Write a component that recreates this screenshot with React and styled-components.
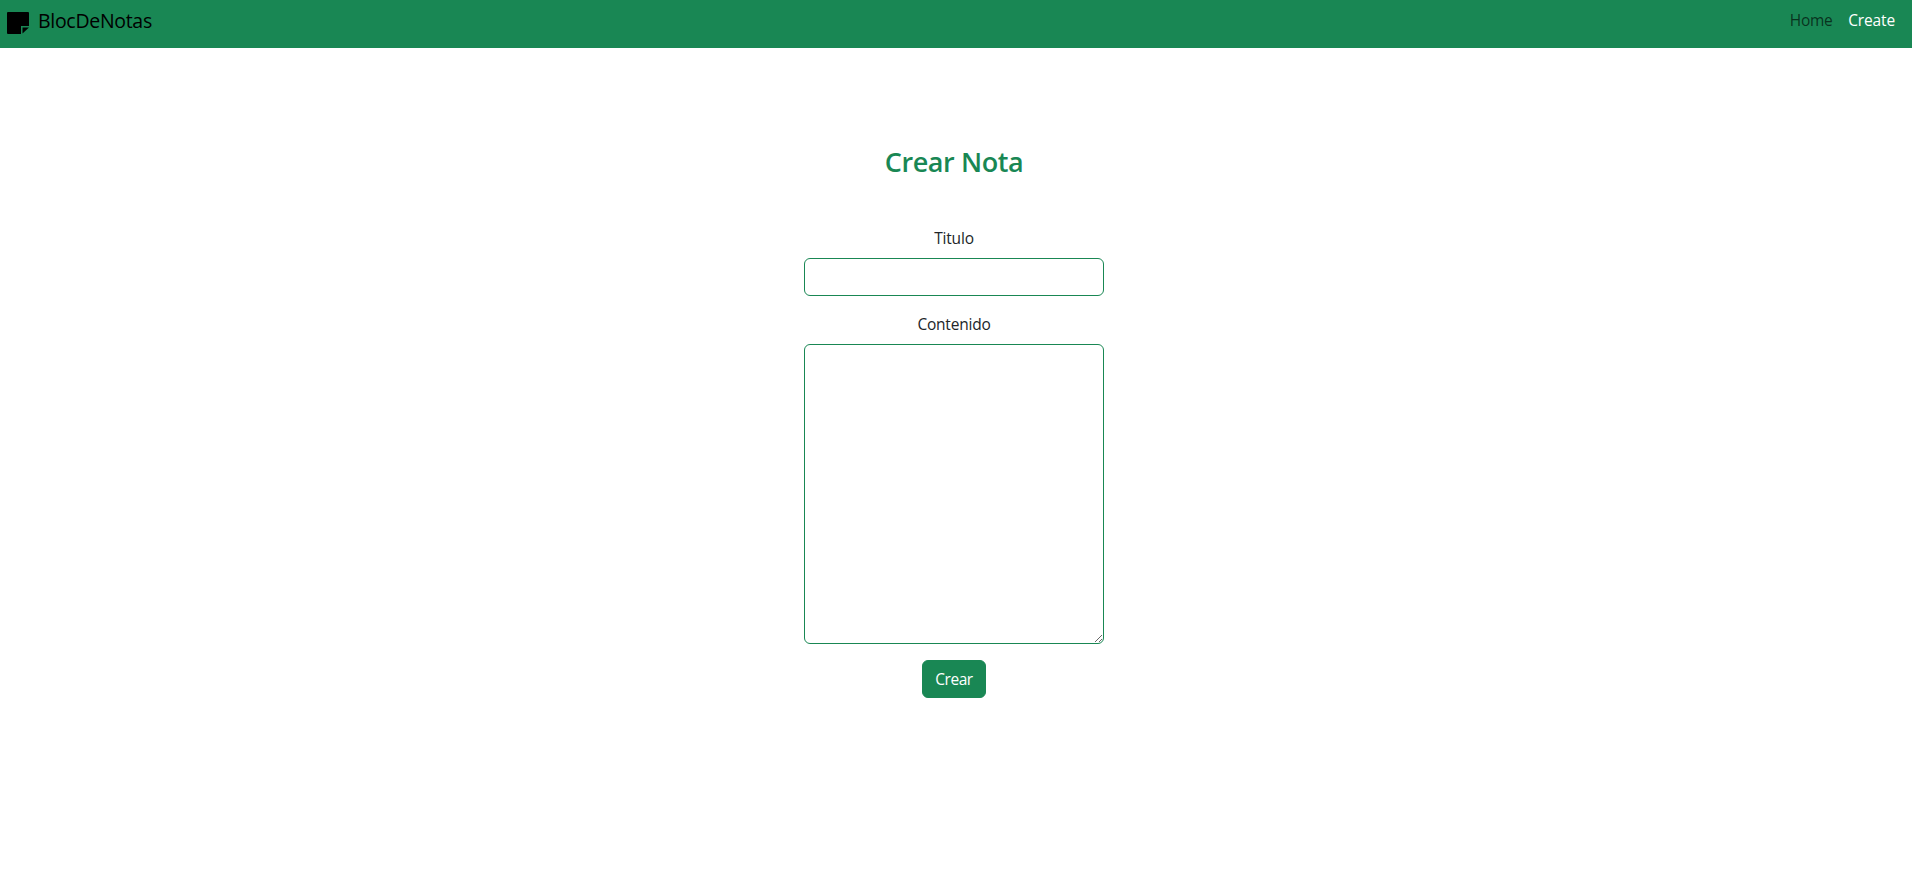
import React from 'react';
import styled, { createGlobalStyle } from 'styled-components';

const GlobalStyle = createGlobalStyle`
  *, *::before, *::after { box-sizing: border-box; }
  body {
    margin: 0;
    background: #fff;
    color: #212529;
    font: 400 15.5px/24px "Segoe UI", "Open Sans", "Noto Sans", sans-serif;
    letter-spacing: -0.2px;
  }
`;

const Navbar = styled.nav`
  display: flex;
  align-items: flex-start;
  justify-content: space-between;
  height: 48px;
  padding: 0 17px 0 7px;
  background: #198754;
`;

const Brand = styled.a`
  display: flex;
  align-items: flex-start;
  gap: 9px;
  padding-top: 6px;
  color: #000;
  font-size: 19.5px;
  line-height: 30px;
  letter-spacing: -0.3px;
  svg { margin-top: 6px; }
`;

const Links = styled.div`
  display: flex;
  gap: 16px;
  padding-top: 8px;
`;

const NavLink = styled.a`
  color: ${(p) => (p.$active ? '#fff' : 'rgba(0, 0, 0, 0.65)')};
  letter-spacing: ${(p) => (p.$active ? '-0.15px' : '-0.35px')};
`;

const Form = styled.form`
  display: flex;
  flex-direction: column;
  align-items: center;
  width: 300px;
  margin: 95px auto 0 804px;
`;

const Title = styled.h1`
  margin: 0 0 45px;
  color: #198754;
  font-size: 27px;
  font-weight: 580;
  line-height: 38px;
  letter-spacing: -0.4px;
`;

const Label = styled.label`
  margin-bottom: 8px;
`;

const Input = styled.input`
  width: 300px;
  height: 38px;
  margin-bottom: 16px;
  padding: 6px 12px;
  border: 1px solid #198754;
  border-radius: 6px;
  font: inherit;
`;

const TextArea = styled.textarea`
  width: 300px;
  height: 300px;
  margin-bottom: 16px;
  padding: 6px 12px;
  border: 1px solid #198754;
  border-radius: 6px;
  font: inherit;
  resize: vertical;
`;

const Button = styled.button`
  width: 64px;
  height: 38px;
  padding: 0;
  border: 1px solid #198754;
  border-radius: 6px;
  background: #198754;
  color: #fff;
  font: inherit;
  letter-spacing: -0.45px;
`;

const NoteIcon = () => (
  <svg width="22" height="22" viewBox="0 0 22 22">
    <path d="M1 0h20a1 1 0 0 1 1 1v13h-8v8H1a1 1 0 0 1-1-1V1a1 1 0 0 1 1-1z" fill="#000" />
    <path d="M15.5 21.5v-6H22z" fill="#000" />
  </svg>
);

export default function App() {
  return (
    <>
      <GlobalStyle />
      <Navbar>
        <Brand><NoteIcon />BlocDeNotas</Brand>
        <Links>
          <NavLink>Home</NavLink>
          <NavLink $active>Create</NavLink>
        </Links>
      </Navbar>
      <Form>
        <Title>Crear Nota</Title>
        <Label htmlFor="titulo">Titulo</Label>
        <Input id="titulo" />
        <Label htmlFor="contenido">Contenido</Label>
        <TextArea id="contenido" />
        <Button type="button">Crear</Button>
      </Form>
    </>
  );
}
